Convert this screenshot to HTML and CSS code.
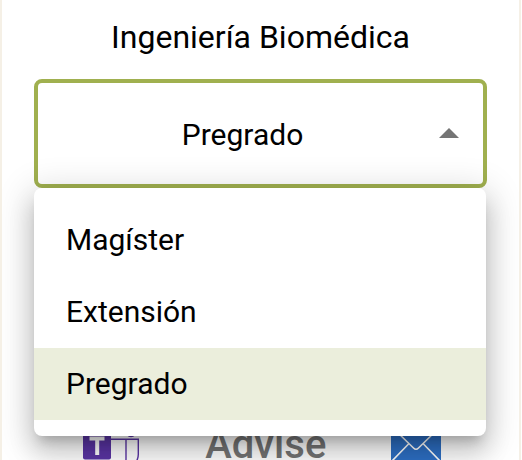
FILE: index.html
```html
<!DOCTYPE html>
<html lang="es">
<head>
<meta charset="utf-8">
<title>Ingeniería Biomédica</title>
<link rel="stylesheet" href="styles.css">
</head>
<body>
<main class="card">
  <h1 class="title"><span>Ingeniería Biomédica</span></h1>
  <div class="select">
    <span class="value">Pregrado</span>
    <svg class="arrow" width="20" height="10" viewBox="0 0 20 10"><path d="M0 10 10 0l10 10z" fill="#757575"/></svg>
    <ul class="menu">
      <li class="item">Magíster</li>
      <li class="item">Extensión</li>
      <li class="item selected">Pregrado</li>
    </ul>
  </div>
  <footer class="contact">
    <svg class="teams" width="58" height="50" viewBox="0 0 58 50">
      <g fill="none" stroke="#5b35a5" stroke-width="1.4"><circle cx="48" cy="5.500" r="5"/><path d="M27 13.200h28.300v15c0 8-5 11-10 9M43 13v20c0 9-6 14-14 14s-12-5-13-13"/></g>
      <rect x="0" y="5" width="28" height="28.500" rx="2" fill="#5b35a5"/>
      <path d="M6.500 12.500h15M14.200 12.500v16.500" fill="none" stroke="#fff" stroke-width="4"/>
    </svg>
    <span class="label">Advise</span>
    <svg class="mail" width="50" height="40" viewBox="0 0 50 40">
      <path fill="#2d6fc4" d="M0 0h50v40H0z"/>
      <path d="M2 2l20.500 20q2.500 2.500 5 0L48 2M18 17.500 1 35M32 17.500 49 35" fill="none" stroke="#fff" stroke-width="1.600"/>
    </svg>
  </footer>
</main>
</body>
</html>
```

FILE: styles.css
```css
* { box-sizing: border-box; }
body {
  margin: 0;
  height: 460px;
  overflow: hidden;
  background: #fff;
  color: #000;
  font: 400 30px/36px Roboto, sans-serif;
}
.card {
  width: 521px;
  height: 460px;
  overflow: hidden;
  padding: 19px 32px 0;
  border: solid #f5f0e6;
  border-width: 0 2px;
}
.title {
  margin: 0 0 24px;
  font: inherit;
  font-size: 32px;
  text-align: center;
}
.select {
  position: relative;
  display: flex;
  align-items: center;
  height: 109px;
  padding: 0 24px 0 8px;
  border: 4px solid #a0b04f;
  border-radius: 8px;
}
.value { flex: 1; padding-top: 2px; text-align: center; }
.arrow { flex: none; margin-top: -1px; }
.menu {
  position: absolute;
  z-index: 1;
  top: 105px;
  left: -4px;
  width: 452px;
  margin: 0;
  padding: 16px 0;
  list-style: none;
  background: #fff;
  border-radius: 8px;
  box-shadow: 0 10px 12px -6px rgba(0,0,0,.2), 0 16px 24px 2px rgba(0,0,0,.14), 0 6px 34px 6px rgba(0,0,0,.14);
}
.item { height: 72px; padding: 18px 32px; }
.selected { background: #ebeedc; }
.contact {
  display: flex;
  align-items: flex-start;
  margin: 238px 46.5px 0 49px;
}
.label {
  margin: -3px auto 0;
  font-size: 40px;
  font-weight: 500;
  line-height: 44px;
  color: #757575;
}
```
